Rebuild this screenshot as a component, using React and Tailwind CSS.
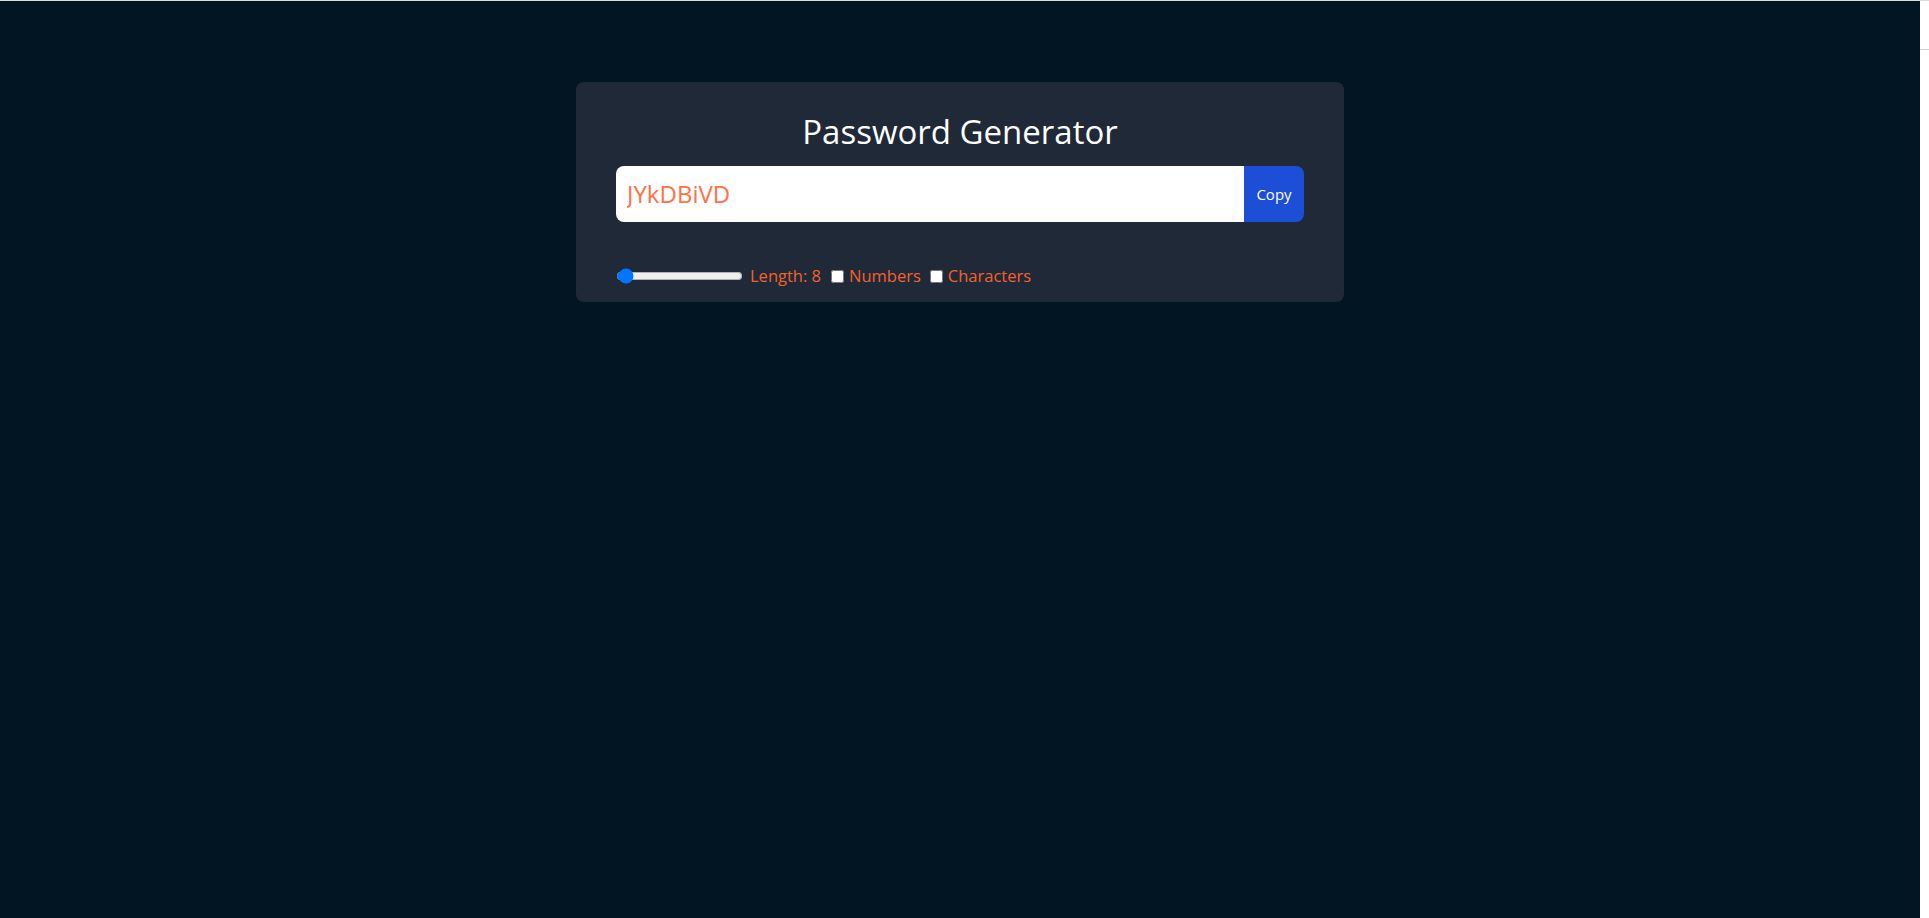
import React, { useState } from "react";

export default function App() {
  const [length, setLength] = useState(8);
  const [num, setNum] = useState(false);
  const [chars, setChars] = useState(false);
  return (
    <div className="flex flex-col h-[918px] w-full overflow-hidden" style={{ fontFamily: '"Open Sans", "Noto Sans", sans-serif' }}>
      <div className="h-[1px] w-full bg-[#dcdcdc]" />
      <div className="flex flex-1 min-h-0">
        <div className="flex-1 bg-[#011522] pt-[81px]">
          <div className="w-[768px] mx-auto rounded-lg bg-[#1f2937] px-10 pt-[30px] pb-[14px]">
            <h1 className="text-white text-center text-[33px] leading-[40px] mb-[14px]">Password Generator</h1>
            <div className="flex h-[56px] rounded-lg overflow-hidden">
              <input
                type="text"
                readOnly
                value="JYkDBiVD"
                className="flex-1 bg-white outline-none px-[11px] text-[24px] text-[#ff7043]"
              />
              <button className="bg-[#1d4ed8] text-white px-3 text-[15px] w-[60px]">Copy</button>
            </div>
            <div className="flex items-center mt-[42px] h-[24px] text-[16.5px] text-[#f4622a]">
              <input
                type="range"
                min={6}
                max={100}
                value={length}
                onChange={(e) => setLength(Number(e.target.value))}
                className="w-[127px] m-0 cursor-pointer"
              />
              <label className="ml-[7px]">Length: {length}</label>
              <input type="checkbox" checked={num} onChange={() => setNum(!num)} className="ml-[10px] mr-[5px] w-[13px] h-[13px]" />
              <label>Numbers</label>
              <input type="checkbox" checked={chars} onChange={() => setChars(!chars)} className="ml-[9px] mr-[5px] w-[13px] h-[13px]" />
              <label>Characters</label>
            </div>
          </div>
        </div>
        <div className="w-[9px] bg-white flex flex-col">
          <div className="h-[48px]" />
          <div className="h-[1px] bg-[#cfcfcf]" />
        </div>
      </div>
    </div>
  );
}
